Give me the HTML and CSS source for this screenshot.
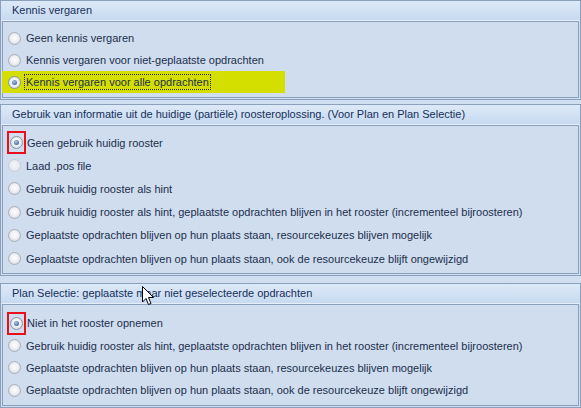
FILE: index.html
```html
<!DOCTYPE html>
<html lang="nl">
<head>
    <meta charset="UTF-8">
    <title>Opties</title>
    <link rel="stylesheet" href="styles.css">
</head>
<body>
    <div class="group g1">
        <div class="group-header">Kennis vergaren</div>
        <div class="group-body">
            <div class="option"><span class="radio"></span><span class="label">Geen kennis vergaren</span></div>
            <div class="option"><span class="radio"></span><span class="label">Kennis vergaren voor niet-geplaatste opdrachten</span></div>
            <div class="option highlight"><span class="radio checked"></span><span class="label focus">Kennis vergaren voor alle opdrachten</span></div>
        </div>
    </div>

    <div class="group g2">
        <div class="group-header">Gebruik van informatie uit de huidige (partiële) roosteroplossing. (Voor Plan en Plan Selectie)</div>
        <div class="group-body">
            <div class="option"><span class="marked"><span class="radio checked"></span></span><span class="label">Geen gebruik huidig rooster</span></div>
            <div class="option"><span class="radio disabled"></span><span class="label">Laad .pos file</span></div>
            <div class="option"><span class="radio"></span><span class="label">Gebruik huidig rooster als hint</span></div>
            <div class="option"><span class="radio"></span><span class="label">Gebruik huidig rooster als hint, geplaatste opdrachten blijven in het rooster (incrementeel bijroosteren)</span></div>
            <div class="option"><span class="radio"></span><span class="label">Geplaatste opdrachten blijven op hun plaats staan, resourcekeuzes blijven mogelijk</span></div>
            <div class="option"><span class="radio"></span><span class="label">Geplaatste opdrachten blijven op hun plaats staan, ook de resourcekeuze blijft ongewijzigd</span></div>
        </div>
    </div>

    <div class="group g3">
        <div class="group-header">Plan Selectie: geplaatste maar niet geselecteerde opdrachten</div>
        <div class="group-body">
            <div class="option"><span class="marked"><span class="radio checked"></span></span><span class="label">Niet in het rooster opnemen</span></div>
            <div class="option"><span class="radio"></span><span class="label">Gebruik huidig rooster als hint, geplaatste opdrachten blijven in het rooster (incrementeel bijroosteren)</span></div>
            <div class="option"><span class="radio"></span><span class="label">Geplaatste opdrachten blijven op hun plaats staan, resourcekeuzes blijven mogelijk</span></div>
            <div class="option"><span class="radio"></span><span class="label">Geplaatste opdrachten blijven op hun plaats staan, ook de resourcekeuze blijft ongewijzigd</span></div>
        </div>
    </div>

    <!-- mouse pointer -->
    <svg class="cursor" width="13" height="20" viewBox="0 0 13 20">
        <path d="M0.5 0.5 L0.5 16 L4 12.5 L6.5 18.5 L9 17.5 L6.5 11.5 L11.5 11.5 Z" fill="#fff" stroke="#000" stroke-width="1"/>
    </svg>
</body>
</html>
```

FILE: styles.css
```css
*{
    margin: 0;
    padding: 0;
    box-sizing: border-box;
}
body{
    width: 581px;
    height: 408px;
    background: #d1deef;
    font-family: 'Liberation Sans', Arial, sans-serif;
    font-size: 11px;
    color: #1e395b;
    position: relative;
    overflow: hidden;
}
.group{
    border: 1px solid #8ba0bd;
    background: #d1deef;
}
.g1{
    height: 100px;
}
.g2{
    margin-top: 4px;
    height: 172px;
}
.g3{
    margin-top: 7px;
    height: 125px;
}
.group-header{
    height: 20px;
    line-height: 19px;
    padding-left: 11px;
    color: #15305a;
    background: linear-gradient(#dde9f8, #c7daf0);
    border-bottom: 1px solid #e6eef9;
}
.group-body{
    margin: 0 1px 1px 1px;
    border: 1px solid #8ba0bd;
    background: #d0ddee;
    display: flex;
    flex-direction: column;
}
.g1 .group-body{
    height: 77px;
    padding-top: 5px;
}
.g1 .option{
    height: 22px;
}
.g2 .group-body{
    height: 149px;
    padding-top: 5px;
}
.g2 .option{
    height: 23.2px;
}
.g3 .group-body{
    height: 102px;
    padding-top: 7px;
}
.g3 .option{
    height: 22.4px;
}
.option{
    display: flex;
    align-items: center;
    padding-left: 5px;
    color: #1b2f4d;
    flex-shrink: 0;
}
.option.highlight{
    background: #d4df00;
    width: 283px;
    margin-left: -1px;
    padding-left: 6px;
}
.radio{
    width: 13px;
    height: 13px;
    border-radius: 50%;
    border: 1px solid #a9afb7;
    background: radial-gradient(circle at 50% 45%, #ffffff 0%, #eef0f3 45%, #c9ced6 100%);
    margin-right: 5px;
    flex-shrink: 0;
    position: relative;
}
.radio.disabled{
    border-color: #c5ccd6;
    background: radial-gradient(circle at 50% 45%, #f3f5f8 0%, #e6eaef 60%, #d6dce4 100%);
}
.radio.checked{
    border-color: #8794a8;
}
.radio.checked::after{
    content: "";
    position: absolute;
    left: 3px;
    top: 3px;
    width: 5px;
    height: 5px;
    border-radius: 50%;
    background: radial-gradient(circle at 40% 35%, #a9c3e6 0%, #4b72a8 70%, #2f5a94 100%);
}
.marked{
    display: flex;
    align-items: center;
    justify-content: center;
    width: 19px;
    height: 23px;
    border: 2px solid #e8101a;
    margin-left: -1px;
    margin-right: 1px;
}
.marked .radio{
    margin-right: 0;
}
.label.focus{
    outline: 1px dotted #2a2a2a;
    padding: 0 1px;
    margin-left: -1px;
    line-height: 14px;
}
.cursor{
    position: absolute;
    left: 142px;
    top: 286px;
}
```
